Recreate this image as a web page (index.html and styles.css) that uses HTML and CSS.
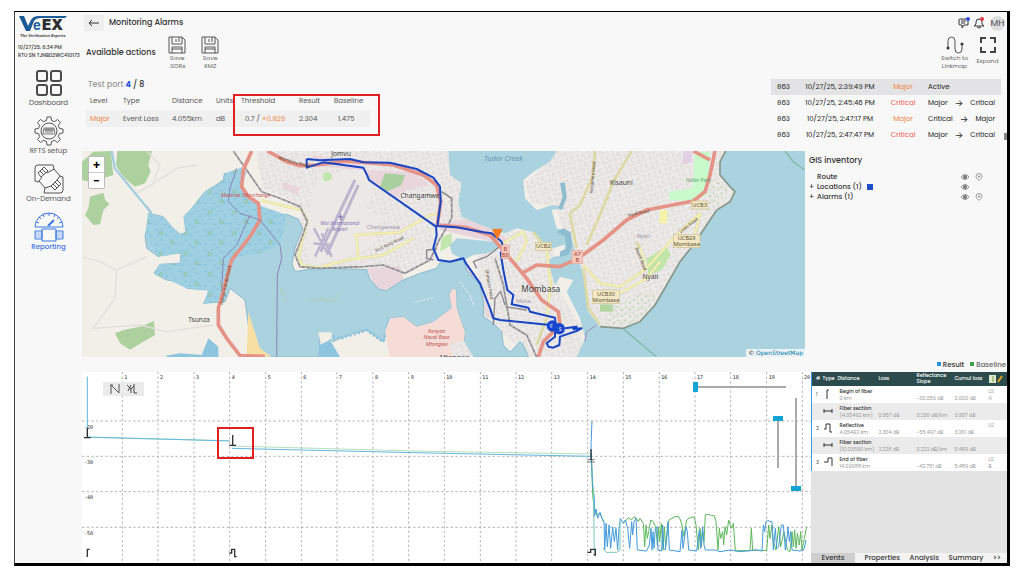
FILE: index.html
```html
<!DOCTYPE html>
<html lang="en">
<head>
<meta charset="utf-8">
<title>Monitoring Alarms</title>
<link rel="stylesheet" href="styles.css">
</head>
<body>
<div class="app">
  <aside class="sidebar">
    <svg class="logo" viewBox="0 0 50 24" role="img" aria-label="VeEX The Verification Experts">
      <path d="M1 1 L6 1 L10 11 L13 5 Q15 1 21 1 L49 1 L47 3 L23 3 Q18 3 16 6 L12 16 H8Z" fill="#1a5a97"/>
      <text class="logo-e" x="15" y="15">e</text>
      <text class="logo-ex" x="24" y="15">EX</text>
      <text class="logo-tag" x="2" y="22">The Verification Experts</text>
    </svg>
    <p class="stamp">10/27/25, 6:34 PM<br>RTU SN TJNB02WC410173</p>
    <nav class="nav">
      <a href="#dashboard"><svg viewBox="0 0 30 30"><g fill="none" stroke="#4a4a4a" stroke-width="2"><rect x="3" y="3" width="10" height="10" rx="2"/><rect x="17" y="3" width="10" height="10" rx="2"/><rect x="3" y="17" width="10" height="10" rx="2"/><rect x="17" y="17" width="10" height="10" rx="2"/></g></svg>Dashboard</a>
      <a href="#setup"><svg viewBox="0 0 30 30"><g fill="none" stroke="#555"><path d="M12.500 4.500 L13 1 H17 L17.500 4.500 L20.500 5.700 L23.500 3.500 L26.500 6.500 L24.300 9.500 L25.500 12.500 L29 13 V17 L25.500 17.500 L24.300 20.500 L26.500 23.500 L23.500 26.500 L20.500 24.300 L17.500 25.500 L17 29 H13 L12.500 25.500 L9.500 24.300 L6.500 26.500 L3.500 23.500 L5.700 20.500 L4.500 17.500 L1 17 V13 L4.500 12.500 L5.700 9.500 L3.500 6.500 L6.500 3.500 L9.500 5.700Z" stroke-linejoin="round"/><circle cx="15" cy="15" r="8"/><path d="M9 18 L10 12 H20 L21 18Z M10 14 H20 M12 12 V17 M14 12 V17 M16 12 V17 M18 12 V17" stroke-width=".8"/></g></svg>RFTS setup</a>
      <a href="#demand"><svg viewBox="0 0 30 30"><g fill="none" stroke="#555"><path d="M5 18 L1 17 V4 Q1 1 4 1 H19 L20 5 M26 12 L29 13 V26 Q29 29 26 29 H10 L11 24"/><path d="M13 9 L20 5 L26 12 L23 16 M17 22 L11 24 L5 17 L8 13 M4 9 L10 3 L14 7 L7 13Z M17 22 L23 16 L27 20 L21 26Z M6 7 L10 11 M8 5 L12 9 M19 20 L23 24 M21 18 L25 22"/></g></svg>On-Demand</a>
      <a href="#reporting" class="active"><svg viewBox="0 0 30 30"><g fill="none" stroke="#3b78e0"><path d="M1 15 A14 14 0 0 1 29 15 H1 M15 1 V4 M5 5 L7 7 M25 5 L23 7 M9 2 L10 5 M21 2 L20 5 M2 10 L5 11 M28 10 L25 11"/><path d="M14 14 L20 8" stroke-width="2"/><path d="M8 17 H22 V29 H8Z M1 19 H8 V27 H1Z M22 19 H29 V27 H22Z"/><path d="M1 21 H8 M1 23 H8 M1 25 H8 M22 21 H29 M22 23 H29 M22 25 H29" stroke-width=".5"/></g></svg>Reporting</a>
    </nav>
  </aside>

  <main class="main">
    <header class="topbar">
      <button class="back" aria-label="Back"><svg viewBox="0 0 12 8"><path d="M11 4 H1 M4 1 L1 4 L4 7" fill="none" stroke="#333"/></svg></button>
      <h1>Monitoring Alarms</h1>
      <div class="user">
        <button aria-label="Messages"><svg viewBox="0 0 12 12"><path d="M2 2 H10 V8 H6 L4 11 V8 H2 Q1 8 1 7 V3 Q1 2 2 2Z M3 4 H8 M3 6 H7" fill="none" stroke="#333"/><circle cx="10" cy="2" r="2" fill="#3049e8"/></svg></button>
        <button aria-label="Notifications"><svg viewBox="0 0 12 12"><path d="M1 9 L3 7 V5 Q3 2 6 2 Q9 2 9 5 V7 L11 9Z M4 10 Q6 12 8 10" fill="none" stroke="#333"/><circle cx="9" cy="2" r="2" fill="#e63946"/></svg></button>
        <button class="avatar">MH</button>
      </div>
    </header>

    <section class="actions">
      <h2>Available actions</h2>
      <button><svg viewBox="0 0 18 18"><path d="M1 1 H14 L17 4 V17 H1Z M4 1 V8 H14 V1 M8 3 V6 M11 1 V6 M4 17 V11 H14 V17 M4 13 H14" fill="none" stroke="#555"/></svg>Save<br>.SORs</button>
      <button><svg viewBox="0 0 18 18"><path d="M1 1 H14 L17 4 V17 H1Z M4 1 V8 H14 V1 M8 3 V6 M11 1 V6 M4 17 V11 H14 V17 M4 13 H14" fill="none" stroke="#555"/></svg>Save<br>KMZ</button>
      <button class="push"><svg viewBox="0 0 18 18"><path d="M2 12 V5 Q2 1 5.500 1 Q9 1 9 5 V13 Q9 17 12.500 17 Q16 17 16 13 V8" fill="none" stroke="#555"/><circle cx="2" cy="12" r="1.500" fill="#333"/><circle cx="16" cy="8" r="1.500" fill="#333"/></svg>Switch to<br>Linkmap</button>
      <button class="expand"><svg viewBox="0 0 18 18"><path d="M2 7 V2 H7 M11 2 H16 V7 M16 11 V16 H11 M7 16 H2 V11" fill="none" stroke="#444" stroke-width="2"/></svg>Expand</button>
    </section>

    <section class="status">
      <div class="port">
        <p class="port-title">Test port <b>4</b> <span>/ 8</span></p>
        <table class="loss">
          <thead><tr><th class="c-level">Level</th><th class="c-type">Type</th><th class="c-dist">Distance</th><th class="c-unit">Units</th><th class="c-thr">Threshold</th><th class="c-res">Result</th><th>Baseline</th></tr></thead>
          <tbody><tr><td class="major">Major</td><td>Event Loss</td><td>4.055km</td><td>dB</td><td class="inset">0.7 / <span class="major">+0.829</span></td><td>2.304</td><td class="inset">1.475</td></tr></tbody>
        </table>
        <div class="mark mark-table"></div>
      </div>
      <table class="history">
        <tr class="on"><td>863</td><td>10/27/25, 2:39:49 PM</td><td class="major">Major</td><td><div class="change">Active</div></td></tr>
        <tr><td>863</td><td>10/27/25, 2:45:46 PM</td><td class="critical">Critical</td><td><div class="change"><span>Major</span><i>→</i><span>Critical</span></div></td></tr>
        <tr><td>863</td><td>10/27/25, 2:47:17 PM</td><td class="major">Major</td><td><div class="change"><span>Critical</span><i>→</i><span>Major</span></div></td></tr>
        <tr><td>863</td><td>10/27/25, 2:47:47 PM</td><td class="critical">Critical</td><td><div class="change"><span>Major</span><i>→</i><span>Critical</span></div></td></tr>
      </table>
      <div class="scroll"></div>
    </section>

    <section class="geo">
      <div class="map">
        <svg viewBox="6 18 2169 618" role="img" aria-label="Map of Mombasa">
          <defs>
            <pattern id="trees" width="74" height="62" patternUnits="userSpaceOnUse">
              <path d="M2 8h9M24 5h7M50 12h9M8 24h8M34 22h8M61 27h8M18 37h8M46 36h7M3 50h9M30 52h8M59 49h9M40 60h8" stroke="#6fb3d6" stroke-width="2"/>
              <circle cx="20" cy="16" r="5" fill="#aad3c0" stroke="#78b79a" stroke-width="2"/><circle cx="54" cy="45" r="5" fill="#aad3c0" stroke="#78b79a" stroke-width="2"/>
            </pattern>
            <pattern id="streets" width="34" height="30" patternUnits="userSpaceOnUse" patternTransform="rotate(-18)">
              <rect width="34" height="30" fill="#e5e2e0"/><path d="M0 5H34M0 17H20M8 0V30M24 5V24M20 24H34" stroke="#f2f0ee" stroke-width="3"/><path d="M14 9h5M29 12v6M13 22h4" stroke="#d8d3d1" stroke-width="2"/>
            </pattern>
            <pattern id="scrub" width="24" height="20" patternUnits="userSpaceOnUse">
              <path d="M2 4h6v4h-6zM14 12h7v4h-7z" fill="#b4d5a5"/>
            </pattern>
          </defs>
          <rect x="6" y="18" width="2169" height="618" fill="#f2efe9"/>
          <g fill="#add19e">
            <path d="M6 50 L40 20 L92 18 L100 90 L70 100 L30 110 L6 105Z"/>
            <path d="M112 18 H216 L205 60 L212 80 L195 115 L165 125 L125 92 L108 60Z"/>
            <path d="M30 155 L70 143 L76 165 L88 178 L70 195 L60 238 L40 240 L15 210 L25 190Z"/>
            <path d="M105 565 L130 555 L180 545 L222 528 L225 570 L190 590 L150 614 L120 595Z"/>
          </g>
          <!-- built-up areas -->
          <path d="M530 18 H1105 L1112 90 L1145 115 L1135 170 L1145 215 L1190 235 L1080 240 L1075 340 L960 385 L870 360 L690 370 L650 340 L665 200 L620 160 L545 130Z" fill="url(#streets)"/>
          <path d="M1060 60 L1105 50 L1145 115 L1145 215 L1240 255 L1230 280 L1080 250Z" fill="url(#streets)"/>
          <path d="M1430 18 H1937 L1915 60 L1920 95 L1965 140 L1950 170 L1910 195 L1850 290 L1790 390 L1725 480 L1680 530 L1630 550 L1560 545 L1520 480 L1500 350 L1470 270 L1440 240 L1430 190 L1350 175 L1335 110 L1380 75Z" fill="url(#streets)"/>
          <path d="M1190 340 L1275 255 L1360 262 L1420 310 L1440 440 L1500 540 L1510 636 H1350 L1260 560 L1210 520Z" fill="url(#streets)"/>
          <path d="M720 90 L850 70 L880 130 L860 190 L900 220 L880 300 L820 330 L760 350 L690 360 L680 260 L690 180Z" fill="#ece8e5"/>
          <g fill="#e9d5dc">
            <path d="M690 30 L830 50 L850 75 L730 65Z"/><path d="M850 75 L1000 80 L1050 120 L965 140 L950 165 L860 105Z"/>
            <path d="M860 370 L960 362 L975 415 L920 435 L890 430Z"/><path d="M1080 235 L1180 220 L1225 250 L1290 285 L1240 290 L1080 255Z"/>
            <path d="M610 110 L660 130 L650 150 L605 130Z"/><path d="M1140 330 L1180 380 L1235 520 L1200 500 L1160 400Z"/>
          </g>
          <path d="M915 85 L975 90 L965 120 L920 140 L900 125Z" fill="#a9cf9f"/>
          <path d="M1085 275 L1115 265 L1115 300 L1080 320Z" fill="#c3e6ae"/>
          <circle cx="742" cy="95" r="14" fill="#c3e6ae"/>
          <!-- western bay -->
          <path d="M205 205 L250 215 L275 245 L300 268 L318 262 L312 215 L340 185 L355 165 L375 140 L400 125 L430 105 L433 85 L450 92 L485 68 L497 82 L480 130 L500 160 L540 180 L555 208 L580 215 L620 208 L655 222 L668 250 L645 310 L636 355 L645 380 L690 372 L750 370 L860 374 L870 402 L895 432 L920 437 L970 405 L1020 385 L1070 370 L1080 352 L1150 345 L1160 375 L1200 420 L1210 470 L1210 515 L1240 535 L1265 560 L1270 600 L1290 622 L1320 590 L1330 600 L1345 636 H1180 L1150 600 L1155 560 L1130 490 L1128 435 L1118 430 L1108 450 L1115 490 L1060 530 L1010 545 L970 515 L930 520 L920 550 L910 590 L860 555 L820 565 L780 580 L760 590 L720 565 L718 636 H565 L522 600 L505 540 L495 465 L450 430 L435 470 L370 475 L395 455 L385 435 L320 430 L300 410 L260 405 L222 385 L240 358 L300 355 L303 325 L260 322 L235 335 L200 310 L195 270 L205 240Z" fill="#aad3df" stroke="#8bb9cf" stroke-width="3"/>
          <path d="M205 205 L250 215 L275 245 L300 268 L318 262 L312 215 L355 165 L400 125 L430 105 L433 85 L485 68 L480 130 L535 180 L620 210 L600 300 L540 325 L470 335 L430 400 L415 470 L370 475 L385 435 L320 430 L222 385 L240 358 L300 355 L303 325 L235 335 L195 270Z" fill="#9fd0e2"/>
          <path d="M205 205 L250 215 L275 245 L300 268 L318 262 L312 215 L355 165 L400 125 L430 105 L433 85 L485 68 L480 130 L535 180 L620 210 L600 300 L540 325 L470 335 L430 400 L415 470 L370 475 L385 435 L320 430 L222 385 L240 358 L300 355 L303 325 L235 335 L195 270Z" fill="url(#trees)"/>
          <path d="M258 632 L300 625 L365 630 L385 580 L415 605 V636 H260Z M718 600 L750 585 L780 636 H715Z" fill="#8ec5de"/>
          <path d="M720 565 L780 580 L860 555 L910 590 L920 550 L930 520" fill="none" stroke="#8fc6de" stroke-width="10" stroke-dasharray="7 6"/>
          <path d="M715 562 L755 562 L755 582 L720 586Z" fill="#f2efe9"/>
          <path d="M1118 430 L1128 435 L1130 490 L1155 560 L1150 600 L1180 636 H930 L915 560 L930 520 L970 515 L1010 545 L1060 530 L1115 490 L1108 450Z" fill="#f5dcd6"/>
          <path d="M1108 600 L1150 585 L1180 636 H1120Z" fill="url(#streets)"/>
          <!-- Tudor creek and the open sea -->
          <path d="M1105 18 L1110 90 L1145 115 L1135 170 L1145 215 L1190 235 L1240 255 L1275 265 L1310 250 L1360 262 L1385 290 L1420 310 L1455 298 L1452 330 L1420 335 L1400 350 L1410 370 L1425 420 L1440 395 L1480 405 L1460 440 L1500 520 L1515 580 L1490 636 H2175 V18 H1937 L1920 50 L1920 90 L1950 125 L1965 140 L1950 170 L1910 195 L1880 240 L1840 300 L1800 350 L1760 420 L1725 480 L1680 530 L1630 550 L1560 545 L1525 500 L1520 440 L1515 400 L1495 345 L1480 300 L1465 262 L1430 250 L1415 195 L1460 190 L1420 180 L1370 195 L1335 160 L1330 105 L1360 80 L1410 50 L1430 18Z" fill="#aad3df"/>
          <path d="M1937 18 L1920 50 L1920 90 L1950 125 L1965 140 L1950 170 L1910 195 L1880 240 L1840 300 L1800 350 L1760 420 L1725 480 L1680 530 L1630 550 L1560 545" fill="none" stroke="#85968a" stroke-width="5"/>
          <path d="M1110 300 L1130 280 L1190 285 L1245 290 L1255 310 L1220 325 L1180 330 L1150 345 L1115 325Z" fill="#aad3df"/>
          <path d="M1440 115 L1455 112 L1460 160 L1445 195 L1435 190 L1448 155Z M1430 260 L1450 250 L1472 262 L1478 300 L1465 330 L1440 335 V320 L1460 310 L1455 275Z" fill="#8dbdce"/>
          <!-- parks on the mainland -->
          <path d="M1845 20 H1890 L1880 150 L1840 168 L1768 165 V140 L1838 130Z" fill="#c8facc"/>
          <path d="M1810 18 H1835 V50 L1808 60Z" fill="#e3d0e3"/>
          <path d="M1700 340 L1760 305 L1772 330 L1745 375 L1705 390Z" fill="#c0e6a8"/>
          <path d="M1740 195 H1762 V235 H1738Z" fill="#f4f3a8"/>
          <path d="M1600 490 L1680 440 L1735 450 L1680 525 L1630 545 L1570 540Z M1890 100 L1950 125 L1920 170 L1885 200Z" fill="url(#scrub)"/>
          <path d="M1560 478 H1598 V500 H1560Z" fill="#b3d6a0"/>
          <!-- minor roads -->
          <g fill="none" stroke="#e2deda" stroke-width="4">
            <path d="M6 335 L60 350 L110 375 L200 335 M110 375 L105 460 L40 550 L180 540 L260 560 L400 540 M160 150 L230 110 L290 70 L350 60 M200 18 L240 60 L220 110"/>
          </g>
          <path d="M95 18 L105 70 L150 125 L195 180 L215 205" fill="none" stroke="#9ecbdc" stroke-width="7"/>
          <path d="M99 18 L109 70 L154 125 L199 180" fill="none" stroke="#e6f0f2" stroke-width="2"/>
          <g fill="none" stroke="#ddd9a4" stroke-width="8" stroke-linejoin="round">
            <path d="M540 165 L620 185 L665 195 L683 230 L665 290 L655 340 L670 362 L720 368 M725 365 L800 345 L910 330 L1000 280 M820 270 L960 262 L1040 215 L1070 205 M830 270 L835 345"/>
            <path d="M1545 18 L1540 90 L1500 180 L1470 205 L1490 310 M1655 18 L1600 110 L1560 210 L1520 300 M1510 360 L1560 415 L1620 425 L1700 370 L1780 280 L1860 205 L1840 290 M1620 445 L1700 400 L1740 350 M1700 370 L1680 310 L1670 290 M1510 370 L1525 490 L1560 540"/>
            <path d="M1260 300 L1330 260 L1340 290 L1310 350 M1360 262 L1400 310 L1412 420 L1400 520 L1370 600"/>
          </g>
          <g fill="none" stroke="#f5f3b4" stroke-width="5" stroke-linejoin="round">
            <path d="M540 165 L620 185 L665 195 L683 230 L665 290 L655 340 L670 362 L720 368 M725 365 L800 345 L910 330 L1000 280 M820 270 L960 262 L1040 215 L1070 205 M830 270 L835 345"/>
            <path d="M1510 360 L1560 415 L1620 425 L1700 370 L1780 280 L1860 205 L1840 290 M1620 445 L1700 400 L1740 350 M1700 370 L1680 310"/>
            <path d="M1260 300 L1330 260 L1340 290 L1310 350 M1400 310 L1412 420 L1400 520"/>
          </g>
          <path d="M505 500 L540 610 L575 636 L500 630Z" fill="#f7dfa4"/>
          <!-- airport -->
          <path d="M722 320 L825 105 M742 325 L835 120" stroke="#bcb5d0" stroke-width="9" fill="none"/>
          <path d="M702 250 L745 330 M745 250 L705 335 M700 295 L755 300 M725 265 L755 335" stroke="#bcb5d0" stroke-width="7" fill="none"/>
          <!-- railways -->
          <g fill="none" stroke="#85858a" stroke-width="5">
            <path d="M460 18 L500 75 L545 140 L600 160 L660 185 L682 230 L665 280 L645 330 L660 365 L720 370 L850 365 L910 360 L975 385 L1050 345 L1075 290 L1115 220 L1115 160 L1085 140 M1245 340 L1270 420 L1290 540 L1340 570 L1370 636"/>
            <path d="M1060 345 L1040 340 L1040 315 L1070 312 M1190 370 L1180 350 L1220 335 L1265 300 M1240 540 L1245 460 L1262 440 L1275 480 M1275 485 L1340 495" stroke-width="4"/>
          </g>
          <path d="M460 18 L500 75 L545 140 L600 160 L660 185 L682 230 L665 280 L645 330 L660 365 L720 370 L850 365 L910 360 L975 385 L1050 345 L1075 290 L1115 220 L1115 160 M1245 340 L1270 420 L1290 540 L1340 570 L1370 636" fill="none" stroke="#dcdcdc" stroke-width="2" stroke-dasharray="8 8"/>
          <!-- trunk roads -->
          <g fill="none" stroke="#e59386" stroke-width="11" stroke-linejoin="round">
            <path d="M515 18 L490 75 L485 125 L505 155 L535 175 L540 225 L510 275 L455 345 L435 420 L415 490 L415 540 L440 580 L480 632 L555 634"/>
            <path d="M562 18 L620 50 L660 62 L710 60 L800 48 L940 60 L1030 90 L1070 120 L1082 170 L1072 240 L1160 248 L1230 270 L1265 310 L1290 340 L1340 400 L1385 465 L1435 500 L1440 540 L1390 590 L1375 636"/>
            <path d="M1325 385 L1370 360 L1440 365 L1495 340 L1570 285 L1640 225 L1700 195 L1840 168 L1875 140 L1890 90 L1905 18 M1840 18 L1890 45"/>
          </g>
          <path d="M470 70 L450 130 L445 170 L480 205 L540 225 L600 300 L605 340 L592 390 L590 636 M510 210 L470 300 L430 340 L425 440" fill="none" stroke="#8a84b4" stroke-width="3"/>
          <path d="M600 430 L620 468 M690 470 L720 460 L760 470 L780 445" stroke="#b5cda0" stroke-width="3" fill="none" stroke-dasharray="12 4"/>
          <path d="M1005 472 L1060 458 M1140 410 L1155 430 L1170 450 L1180 480" stroke="#d5e4f0" stroke-width="4" stroke-dasharray="8 4" fill="none"/>
          <path d="M1630 552 L1730 636 M2115 18 L2140 50 L2175 76" stroke="#80b8a8" stroke-width="4" fill="none"/>
          <path d="M1515 590 L1520 560 L1550 540" fill="none" stroke="#9a91bd" stroke-width="3"/>
          <!-- monitored route -->
          <g fill="none" stroke="#1845c4" stroke-width="6" stroke-linejoin="round">
            <path d="M680 42 L720 46 L810 42 L850 52 L930 53 L1010 72 L1060 98 L1080 125 L1082 170 L1072 243 L1130 247 L1210 262 L1235 265 L1265 290 L1270 310 L1262 325 L1270 375 L1282 435 L1300 450 L1295 478 L1345 488 L1350 500 L1425 518 L1428 555"/>
            <path d="M680 42 V68 L730 52 L850 68 L862 92 L867 105 L1068 245 L1070 270 L1060 310 L1075 345 L1110 350 L1150 340 L1158 355 L1200 415 L1230 490 L1240 520 L1260 525 L1410 540 L1425 545 M1455 550 L1490 545 L1480 552 L1505 550 L1490 558 L1440 575 L1438 600 L1420 608 L1405 605 L1400 595 L1425 575 V560"/>
          </g>
          <circle cx="1417" cy="543" r="17" fill="#1a47cf"/><circle cx="1438" cy="551" r="17" fill="#1a47cf"/>
          <path d="M1238 253 H1266 L1252 282Z" fill="#f47b20" stroke="#f47b20" stroke-width="3"/>
          <!-- road shields -->
          <g fill="#f3e8c5" stroke="#c9c090" stroke-width="2"><rect x="1366" y="292" width="48" height="24"/><rect x="1834" y="168" width="50" height="24"/><rect x="1780" y="268" width="80" height="40"/><rect x="1538" y="435" width="80" height="40"/></g>
          <g fill="#f5c9bd" stroke="#e5a59a" stroke-width="2"><rect x="1476" y="316" width="32" height="40"/><rect x="1264" y="300" width="24" height="40"/></g>
          <g class="shield"><text x="1390" y="310">UCB2</text><text x="1859" y="186">UCB3</text><text x="1820" y="286">UCB29</text><text x="1820" y="304">Mombasa</text><text x="1578" y="453">UCB30</text><text x="1578" y="471">Mombasa</text><text class="red" x="1492" y="334">A7</text><text class="red" x="1492" y="352">B</text><text class="red" x="1276" y="318">B</text><text class="red" x="1276" y="337">B8</text></g>
          <g class="place"><text x="783" y="34">Jomvu</text><text x="357" y="532">Tsunza</text><text x="1020" y="159">Changamwe</text><text x="1624" y="120">Kisauni</text><text x="1711" y="402">Nyali</text><text x="1124" y="645">Mtongwe</text><text class="city" x="1382" y="440">Mombasa</text></g>
          <g class="district"><text x="910" y="251">Changamwe</text><text x="1690" y="280">Nyali</text><text x="1330" y="475">Mvita</text></g>
          <g class="airport"><text x="780" y="239">Moi International</text><text x="780" y="259">Airport</text></g>
          <path d="M782 206 L784 212 L792 218 L784 217 L783 222 L786 225 H778 L781 222 L780 217 L772 218 L780 212Z" fill="#8470b5"/>
          <text class="sea" x="1270" y="48">Tudor Creek</text>
          <g class="base"><text x="1070" y="563">Kenyan</text><text x="1070" y="583">Naval Base</text><text x="1070" y="603">Mtongwe</text><text x="497" y="156">Mazeras Interchange</text></g>
          <g class="road"><text transform="translate(428 480) rotate(-78)">Dongo Kundu Road</text><text transform="translate(1538 145) rotate(-85)">Kengeleni Road</text><text transform="translate(1645 215) rotate(-12)">Nyali Road</text><text transform="translate(1802 265) rotate(-38)">Links Road</text><text transform="translate(1665 310) rotate(68)">Beach Road</text><text transform="translate(888 322) rotate(-26)">Port Reitz Road</text><text transform="translate(1216 375) rotate(80)">Shimanzi Road</text><text transform="translate(595 42) rotate(16)">Mombasa Road</text></g>
          <text class="park" x="1855" y="110">Haller Park</text>
          <g class="pin"><text x="1414" y="549">F</text><text x="1440" y="558">S</text></g>
        </svg>
        <div class="zoom"><button aria-label="Zoom in">+</button><button aria-label="Zoom out">−</button></div>
        <div class="credit">© <a href="#osm">OpenStreetMap</a></div>
      </div>
      <aside class="gis">
        <h2>GIS inventory</h2>
        <ul>
          <li><i></i><span>Route</span><svg class="eye" viewBox="0 0 10 8"><path d="M1 4 Q5 -1 9 4 Q5 9 1 4Z" fill="none" stroke="#999"/><circle cx="5" cy="4" r="2" fill="#777"/></svg><svg class="loc" viewBox="0 0 8 8"><path d="M4 7.500 Q1 5 1 3.500 A3 3 0 0 1 7 3.500 Q7 5 4 7.500Z" fill="none" stroke="#999"/><circle cx="4" cy="3.500" r="1" fill="#888"/></svg></li>
          <li><i>+</i><span>Locations (1) <b class="swatch"></b></span><svg class="eye" viewBox="0 0 10 8"><path d="M1 4 Q5 -1 9 4 Q5 9 1 4Z" fill="none" stroke="#999"/><circle cx="5" cy="4" r="2" fill="#777"/></svg><svg class="loc" viewBox="0 0 8 8"></svg></li>
          <li><i>+</i><span>Alarms (1)</span><svg class="eye" viewBox="0 0 10 8"><path d="M1 4 Q5 -1 9 4 Q5 9 1 4Z" fill="none" stroke="#999"/><circle cx="5" cy="4" r="2" fill="#777"/></svg><svg class="loc" viewBox="0 0 8 8"><path d="M4 7.500 Q1 5 1 3.500 A3 3 0 0 1 7 3.500 Q7 5 4 7.500Z" fill="none" stroke="#999"/><circle cx="4" cy="3.500" r="1" fill="#888"/></svg></li>
        </ul>
      </aside>
    </section>

    <div class="legend"><span class="k-result">Result</span><span class="k-base">Baseline</span></div>

    <section class="trace">
      <div class="chart">
        <svg viewBox="6 51 2187 573" role="img" aria-label="OTDR trace">
          <path d="M127 51V624M234 51V624M342 51V624M449 51V624M557 51V624M664 51V624M771 51V624M879 51V624M986 51V624M1093 51V624M1201 51V624M1308 51V624M1415 51V624M1523 51V624M1630 51V624M1738 51V624M1845 51V624M1952 51V624M2060 51V624M2167 51V624M6 198H2193M6 304H2193M6 410H2193M6 517H2193" stroke="#b4b4b4" stroke-width="3" stroke-dasharray="7 7" fill="none"/>
          <g class="tick"><text x="133" y="73">1</text><text x="240" y="73">2</text><text x="348" y="73">3</text><text x="455" y="73">4</text><text x="563" y="73">5</text><text x="670" y="73">6</text><text x="777" y="73">7</text><text x="885" y="73">8</text><text x="992" y="73">9</text><text x="1099" y="73">10</text><text x="1207" y="73">11</text><text x="1314" y="73">12</text><text x="1421" y="73">13</text><text x="1529" y="73">14</text><text x="1636" y="73">15</text><text x="1744" y="73">16</text><text x="1851" y="73">17</text><text x="1958" y="73">18</text><text x="2066" y="73">19</text><text x="2172" y="73">20</text>
          <text x="12" y="221">-20</text><text x="12" y="327">-30</text><text x="12" y="433">-40</text><text x="12" y="540">-50</text></g>
          <path d="M22 247 L449 257 M456 273 L1000 288 L1533 297" fill="none" stroke="#8ccf9a" stroke-width="2"/>
          <path d="M22 65 V246 L449 258 M456 280 L1000 293 L1533 304" fill="none" stroke="#62b7dc" stroke-width="3"/>
          <path d="M1534 295 L1538 420 L1543 465 L1550 480 L1560 475 L1570 500 M1635 500 L1645 488 L1652 494 L1665 485 L1675 500 L1680 490 L1690 505 L1694 575 L1698 510 L1702 550 L1706 530 L1712 495 L1720 500 L1728 520 L1732 570 L1736 515 L1739 560 L1744 505 L1749 585 L1753 515 L1757 575 L1762 530 L1767 495 L1776 490 L1785 485 L1795 484 L1800 492 L1806 510 L1812 545 L1816 520 L1820 495 L1830 488 L1842 485 L1848 510 L1855 585 L1860 520 L1864 575 L1868 530 L1872 560 L1876 480 L1885 478 L1895 482 L1903 482 L1908 500 L1914 585 L1918 520 L1922 550 L1928 530 L1931 570 L1935 515 L1940 540 L1946 495 L1954 520 L1960 505 L1966 587 L2010 587 L2014 520 L2018 585 L2060 587 L2066 510 L2070 550 L2076 510 L2080 560 L2088 585 L2096 515 L2102 575 L2112 530 L2122 585 L2130 590 L2136 530 L2140 575 L2144 525 L2148 580 L2152 535 L2158 570 L2162 530 L2166 585 L2173 550 L2180 515" fill="none" stroke="#5db85a" stroke-width="3"/>
          <path d="M1536 198 L1533 270 L1537 380 L1543 430 L1543 485 L1548 462 L1553 490 L1560 472 L1566 490 L1572 500 L1574 585 L1578 505 L1582 575 L1587 510 L1592 580 L1598 515 L1603 560 L1608 520 L1613 585 L1617 520 L1621 490 L1630 505 L1636 495 L1643 520 L1649 580 L1655 500 L1658 540 L1662 500 L1668 490 L1672 585 L1700 588 L1708 570 L1713 520 L1716 585 L1719 530 L1722 580 L1726 520 L1731 515 L1734 585 L1745 588 L1748 510 L1751 580 L1756 585 L1764 500 L1768 585 L1800 590 L1806 525 L1809 580 L1814 545 L1818 515 L1822 530 L1826 585 L1850 588 L1858 525 L1862 580 L1868 515 L1872 570 L1876 585 L1905 585 L1920 590 L1950 585 L1980 590 L2030 585 L2046 588 L2050 510 L2054 530 L2058 500 L2063 495 L2070 500 L2076 500 L2080 585 L2086 520 L2090 580 L2096 575 L2104 510 L2110 510 L2116 585 L2122 540 L2124 515 L2128 560 L2132 530 L2136 585 L2160 588 L2172 583 L2178 555" fill="none" stroke="#429bdc" stroke-width="3"/>
          <path d="M1540 400 L1543 600 M1570 580 L1578 592 L1610 592 L1620 585 V500" fill="none" stroke="#79cbbb" stroke-width="3"/>
          <g fill="none" stroke="#333" stroke-width="4"><path d="M22 218V248M12 248H32M458 240V271M448 271H468M1533 283V316M22 606V583H29M448 594H455V583H464V605H470M1522 592H1532V583H1546V600H1541"/><path d="M1522 314H1544M1522 321H1544" stroke-width="2"/></g>
        </svg>
        <div class="shape"><button aria-label="Trace shape"><svg viewBox="0 0 12 12"><path d="M2 11 V2 L10 10 V1 M1 2 H4" fill="none" stroke="#555"/></svg></button><button aria-label="Trace overlay"><svg viewBox="0 0 12 12"><path d="M1 2 L5 6 V10 M5 2 L2 8 M5 6 L8 3 M8 1 V10 H11" fill="none" stroke="#444"/></svg></button></div>
        <input class="slide h" type="range" value="0" aria-label="Horizontal zoom">
        <input class="slide v1" type="range" value="0" aria-label="Vertical zoom">
        <input class="slide v2" type="range" value="100" aria-label="Vertical offset">
        <div class="mark mark-event"></div>
      </div>
      <div class="events">
        <table>
          <thead><tr><th class="e-n">#</th><th class="e-t">Type</th><th class="e-d">Distance</th><th class="e-l">Loss</th><th class="e-r">Reflectance<br>Slope</th><th class="e-c">Cumul loss</th><th><svg class="edit" viewBox="0 0 14 8"><rect width="7" height="8" fill="#dfe8c8"/><path d="M4 1V7" stroke="#7a9a50"/><path d="M9 7 L13 1" stroke="#d9a520" stroke-width="2"/></svg></th></tr></thead>
          <tbody>
            <tr><td>1</td><td><svg viewBox="0 0 10 10"><path d="M4 10V1H6" fill="none" stroke="#333"/></svg></td><td><b>Begin of fiber</b>0 km</td><td></td><td>-30.050 dB</td><td>0.000 dB</td><td>LS<br>A</td></tr>
            <tr><td></td><td><svg viewBox="0 0 10 10"><path d="M1 5H9M1 3V7M9 3V7" fill="none" stroke="#333"/></svg></td><td><b>Fiber section</b>(4.05492 km)</td><td>0.957 dB</td><td>0.236 dB/km</td><td>0.957 dB</td><td></td></tr>
            <tr><td>2</td><td><svg viewBox="0 0 10 10"><path d="M1 6H3V1H7V9H9" fill="none" stroke="#333"/></svg></td><td><b>Reflective</b>4.05492 km</td><td>2.304 dB</td><td>-55.497 dB</td><td>3.261 dB</td><td>LS<br>&nbsp;</td></tr>
            <tr><td></td><td><svg viewBox="0 0 10 10"><path d="M1 5H9M1 3V7M9 3V7" fill="none" stroke="#333"/></svg></td><td><b>Fiber section</b>(10.03596 km)</td><td>2.228 dB</td><td>0.222 dB/km</td><td>5.489 dB</td><td></td></tr>
            <tr><td>3</td><td><svg viewBox="0 0 10 10"><path d="M1 5H5V1H9V9" fill="none" stroke="#333"/></svg></td><td><b>End of fiber</b>14.09088 km</td><td></td><td>-42.751 dB</td><td>5.489 dB</td><td>LS<br>B</td></tr>
          </tbody>
        </table>
        <div class="tabs"><button class="on">Events</button><button>Properties</button><button>Analysis</button><button>Summary</button><button>&gt;&gt;</button></div>
      </div>
    </section>
  </main>
</div>
</body>
</html>
```
FILE: styles.css
```css
* { box-sizing: border-box; }
body { margin: 11px 14px 0 14px; background: #fff; color: #333; font-family: Poppins, Inter, "Noto Sans", sans-serif; font-size: 7px; line-height: 8px; }
h1, h2, p, ul { margin: 0; padding: 0; font-weight: 500; }
button { border: 0; padding: 0; background: none; color: inherit; font: inherit; }
a { color: inherit; text-decoration: none; }
svg { display: block; }
table { border-collapse: collapse; }
th, td { padding: 0; font-weight: 400; text-align: left; white-space: nowrap; }
.major { color: #f08040; }
.critical { color: #ee5a52; }
.mark { position: absolute; border: 2px solid #e02020; }

.app { display: flex; background: #f8f8f8; border: solid #000; border-width: 1px 3px 3px 1px; border-left-color: #444; }

/* Sidebar */
.sidebar { width: 67px; padding: 3px 3px 0 3px; flex: none; }
.logo { width: 50px; height: 24px; }
.logo-e { font: bold 13px Inter, sans-serif; fill: #1c5f9e; }
.logo-ex { font: 900 15px Inter, sans-serif; fill: #2c2c30; }
.logo-tag { font: bold italic 4px "Liberation Sans", sans-serif; fill: #333; }
.stamp { margin-top: 5px; font-size: 5px; white-space: nowrap; }
.nav { display: flex; flex-direction: column; gap: 8px; margin-top: 8px; }
.nav a { display: flex; flex-direction: column; align-items: center; font-size: 7px; line-height: 10px; color: #555; }
.nav svg { width: 30px; height: 30px; }
.nav .active { color: #3b70e0; font-weight: 500; }

/* Header and actions */
.main { flex: 1; min-width: 0; }
.topbar { display: flex; align-items: center; height: 22px; padding: 0 2px; }
.topbar h1 { font-size: 8px; margin-left: 5px; }
.back { width: 20px; height: 16px; background: #eee; }
.back svg { width: 12px; height: 8px; margin: auto; }
.user { margin-left: auto; display: flex; align-items: center; gap: 3px; }
.user svg { width: 12px; height: 12px; }
.avatar { width: 15px; height: 15px; border-radius: 8px; background: #dcdee0; font-size: 9px; color: #555; margin-left: 2px; display: flex; align-items: center; justify-content: center; }
.actions { display: flex; align-items: flex-start; height: 43px; padding: 2px 3px 0 4px; }
.actions h2 { font-size: 8px; line-height: 34px; margin-right: 5px; }
.actions button { width: 33px; display: flex; flex-direction: column; align-items: center; color: #666; font-size: 6px; text-align: center; white-space: nowrap; }
.actions svg { width: 18px; height: 18px; }
.actions .push { margin-left: auto; }
.actions .expand { gap: 3px; }

/* Test port and alarm history */
.status { display: flex; justify-content: space-between; align-items: flex-start; height: 74px; padding: 2px 6px 0 4px; position: relative; }
.port { position: relative; }
.port-title { font-size: 8px; line-height: 11px; padding: 0 2px; color: #999; }
.port-title b { color: #1e50d2; }
.port-title span { color: #333; }
.loss { color: #555; margin-top: 2px; }
.loss tr > :first-child { padding-left: 4px; }
.loss thead { line-height: 18px; }
.loss tbody { line-height: 17px; background: #f0f0f0; }
.loss .inset { padding-left: 4px; }
.c-level { width: 37px; }
.c-type { width: 49px; }
.c-dist { width: 44px; }
.c-unit { width: 25px; }
.c-thr { width: 58px; }
.c-res { width: 35px; }
.loss th:last-child { width: 36px; }
.mark-table { left: 147px; top: 15px; width: 147px; height: 42px; }
.history { width: 230px; color: #222; }
.history tr { height: 16px; }
.history .on { background: #e3e3e5; }
.history td:nth-child(1) { width: 27px; padding-left: 6px; }
.history td:nth-child(2) { width: 84px; text-align: center; }
.history td:nth-child(3) { width: 42px; text-align: center; }
.change { display: flex; justify-content: space-between; padding: 0 6px 0 4px; }
.change i { font-style: normal; font-size: 9px; }
.scroll { position: absolute; right: 0; bottom: 11px; width: 3px; height: 7px; background: #888; }

/* Map and inventory */
.geo { display: flex; }
.map { position: relative; flex: 1; min-width: 0; overflow: hidden; }
.map > svg { width: 100%; height: auto; }
.map text { text-anchor: middle; font-family: "Noto Sans", sans-serif; }
.shield { font-size: 17px; fill: #555030; }
.shield .red { fill: #a03a30; }
.place { font-size: 20px; fill: #444; }
.place .city { font-size: 25px; }
.district { font-size: 17px; fill: #a196a8; }
.airport { font-size: 15px; font-style: italic; fill: #8470b5; }
.sea { font-size: 22px; font-style: italic; fill: #6a93b5; }
.base { font-size: 16px; font-style: italic; fill: #c35555; }
.map .road text { font-size: 13px; text-anchor: start; fill: #4d4030; }
.park { font-size: 15px; font-style: italic; fill: #5a9a70; }
.pin { font-size: 15px; fill: #fff; }
.zoom { position: absolute; left: 6px; top: 5px; width: 17px; border: 1px solid #bbb; border-radius: 2px; background: #fff; }
.zoom button { display: block; width: 100%; height: 15px; font-size: 12px; line-height: 12px; font-weight: 600; color: #000; }
.zoom button + button { border-top: 1px solid #ccc; height: 16px; }
.credit { position: absolute; right: 0; bottom: 0; padding: 0 2px; background: #e9f3f6; font: 6px/8px "DejaVu Sans", sans-serif; }
.credit a { color: #0078a8; }
.gis { width: 202px; padding: 6px 24px 0 4px; }
.gis h2 { font-size: 8px; }
.gis ul { list-style: none; margin-top: 7px; }
.gis li { display: flex; align-items: center; height: 10px; font-weight: 500; }
.gis i { width: 8px; font-style: normal; }
.gis span { flex: 1; display: flex; align-items: center; gap: 5px; }
.swatch { width: 6px; height: 6px; background: #1e4fc8; }
.eye { width: 10px; height: 8px; margin-right: 5px; }
.loc { width: 8px; height: 8px; }

/* Trace and events */
.legend { display: flex; justify-content: flex-end; gap: 6px; height: 15px; padding-right: 1px; font-size: 7px; line-height: 15px; font-weight: 500; }
.legend span::before { content: ""; display: inline-block; width: 4px; height: 4px; margin-right: 2px; vertical-align: 1px; }
.k-result::before { background: #2196d8; }
.k-base { color: #666; }
.k-base::before { background: #43a047; }
.trace { display: flex; }
.chart { position: relative; flex: 1; min-width: 0; background: #fff; }
.chart > svg { width: 100%; height: auto; }
.tick { font: 15px "DejaVu Sans Mono", monospace; fill: #222; }
.shape { position: absolute; left: 21px; top: 10px; display: flex; gap: 5px; padding: 1px 6px; background: #ebebeb; }
.shape svg { width: 12px; height: 12px; }
.slide { position: absolute; margin: 0; appearance: none; }
.slide::-webkit-slider-thumb { appearance: none; background: #12a5d4; width: 5px; height: 10px; }
.slide.h { right: 25px; top: 10px; width: 93px; height: 10px; background: linear-gradient(#aaa, #aaa) center / 100% 2px no-repeat; }
.slide.v1, .slide.v2 { writing-mode: vertical-lr; width: 10px; background: linear-gradient(#aaa, #aaa) center / 2px 100% no-repeat; }
.slide.v1 { right: 28px; top: 44px; height: 52px; }
.slide.v2 { right: 10px; top: 26px; height: 93px; }
.slide.v1::-webkit-slider-thumb, .slide.v2::-webkit-slider-thumb { width: 10px; height: 5px; }
.mark-event { left: 135px; top: 55px; width: 37px; height: 32px; }
.events { width: 196px; display: flex; flex-direction: column; background: #e3e3e3; }
.events table { width: 100%; table-layout: fixed; font-size: 5px; line-height: 7px; border-left: 1px solid #3c9be0; }
.events thead { background: #2b4b4c; color: #fff; }
.events th { height: 14px; font-weight: 500; line-height: 6px; }
.events td { height: 17px; vertical-align: bottom; padding-bottom: 1px; color: #999; }
.events td:nth-child(1) { vertical-align: middle; color: #444; }
.events td:nth-child(2) { vertical-align: middle; }
.events td:nth-child(3) { padding-left: 2px; }
.events tr > :first-child { padding-left: 4px; }
.events tbody tr { background: #fff; }
.events tbody tr:nth-child(even) { background: #ebebeb; }
.events td b { display: block; font-weight: 500; color: #333; }
.events td svg { width: 10px; height: 10px; }
.edit { width: 14px; height: 8px; }
.e-n { width: 11px; }
.e-t { width: 15px; }
.e-d { width: 41px; }
.e-l { width: 38px; }
.e-r { width: 38px; }
.e-c { width: 34px; }
.tabs { display: flex; justify-content: space-between; margin-top: auto; padding-right: 6px; background: #f3f3f3; font-size: 7px; line-height: 10px; font-weight: 500; }
.tabs .on { width: 44px; background: #cecece; }
```
